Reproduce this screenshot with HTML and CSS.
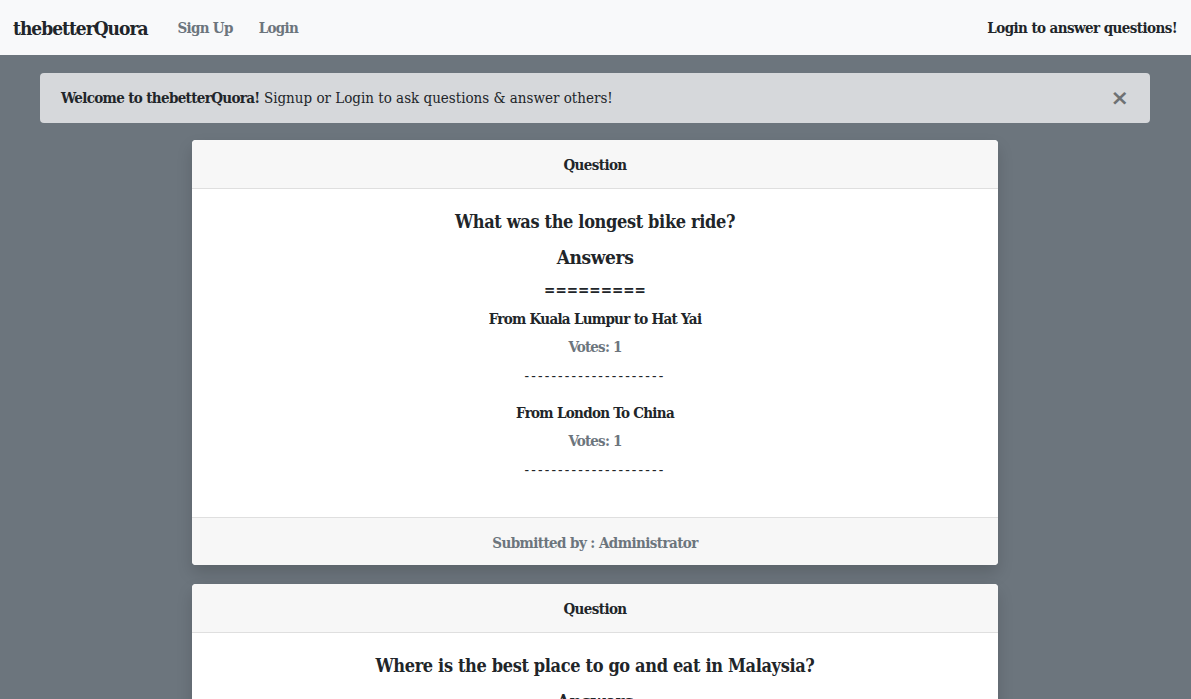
FILE: index.html
```html
<!DOCTYPE html>
<html lang="en">
<head>
    <meta charset="UTF-8">
    <meta name="viewport" content="width=device-width, initial-scale=1.0">
    <title>thebetterQuora</title>
    <link rel="stylesheet" href="styles.css">
</head>
<body>
    <nav class="navbar">
        <a class="brand" href="#">thebetterQuora</a>
        <ul class="nav-links">
            <li><a href="#signup">Sign Up</a></li>
            <li><a href="#login">Login</a></li>
        </ul>
        <span class="nav-text">Login to answer questions!</span>
    </nav>

    <main class="container">
        <div class="alert">
            <p><strong>Welcome to thebetterQuora!</strong> Signup or Login to ask questions &amp; answer others!</p>
            <button class="close" aria-label="Close">&times;</button>
        </div>

        <div class="card">
            <div class="card-header">Question</div>
            <div class="card-body">
                <h2 class="question">What was the longest bike ride?</h2>
                <h3 class="answers-title">Answers</h3>
                <div class="divider-eq">=========</div>
                <div class="answer">
                    <h4>From Kuala Lumpur to Hat Yai</h4>
                    <p class="votes">Votes: 1</p>
                    <p class="divider">---------------------</p>
                </div>
                <div class="answer">
                    <h4>From London To China</h4>
                    <p class="votes">Votes: 1</p>
                    <p class="divider">---------------------</p>
                </div>
            </div>
            <div class="card-footer">Submitted by : Administrator</div>
        </div>

        <div class="card">
            <div class="card-header">Question</div>
            <div class="card-body">
                <h2 class="question">Where is the best place to go and eat in Malaysia?</h2>
                <h3 class="answers-title">Answers</h3>
                <div class="divider-eq">=========</div>
            </div>
        </div>
    </main>
</body>
</html>
```

FILE: styles.css
```css
body {
    margin: 0;
    padding: 0;
    background-color: #6c757d;
    font-family: "DejaVu Serif Condensed", "DejaVu Serif", serif;
    font-size: 15px;
    color: #212529;
}

a {
    text-decoration: none;
}

.navbar {
    display: flex;
    align-items: center;
    height: 55px;
    padding: 0 14px 0 13px;
    background-color: #f8f9fa;
    box-sizing: border-box;
}

.brand {
    color: #212529;
    font-size: 19px;
    font-weight: bold;
    letter-spacing: -1px;
    margin-right: 17px;
}

.nav-links {
    list-style-type: none;
    margin: 0;
    padding: 0;
    display: flex;
    flex: 1;
}

.nav-links li {
    padding: 0 13px;
}

.nav-links a {
    color: #6c757d;
    font-weight: bold;
    font-size: 15px;
    letter-spacing: -0.7px;
}

.nav-text {
    font-weight: bold;
    font-size: 15px;
    letter-spacing: -0.58px;
}

.container {
    max-width: 1110px;
    margin: 0 auto;
    padding: 18px 41px 0 40px;
}

.alert {
    display: flex;
    align-items: center;
    justify-content: space-between;
    height: 50px;
    padding: 0 21px;
    box-sizing: border-box;
    background-color: #d6d8db;
    border-radius: 4px;
    margin-bottom: 17px;
}

.alert p {
    margin: 0;
    font-size: 15px;
}

.alert strong {
    font-weight: bold;
    letter-spacing: -0.65px;
}

.close {
    background: none;
    border: none;
    padding: 0;
    font-size: 22px;
    font-weight: bold;
    color: #6e7173;
    cursor: pointer;
    font-family: "DejaVu Sans", sans-serif;
    line-height: 1;
}

.card {
    width: 806px;
    margin: 0 auto 19px;
    background-color: #fff;
    border-radius: 4px;
    box-shadow: 0 8px 16px rgba(0, 0, 0, 0.15);
    text-align: center;
    overflow: hidden;
}

.card-header {
    height: 48px;
    line-height: 50px;
    background-color: #f7f7f7;
    border-bottom: 1px solid #dfdfdf;
    font-weight: bold;
    font-size: 15px;
    letter-spacing: -0.6px;
}

.card-body {
    padding: 21px 20px 20px;
}

.card-footer {
    height: 48px;
    line-height: 50px;
    box-sizing: border-box;
    background-color: #f7f7f7;
    border-top: 1px solid #dfdfdf;
    color: #6c757d;
    font-weight: bold;
    font-size: 15px;
    letter-spacing: -0.57px;
}

.question {
    margin: 0 0 11px;
    font-size: 18px;
    line-height: 24px;
    font-weight: bold;
    letter-spacing: -0.35px;
}

.answers-title {
    margin: 0 0 10px;
    font-size: 19px;
    line-height: 24px;
    font-weight: bold;
    letter-spacing: -0.4px;
}

.divider-eq {
    font-size: 15px;
    line-height: 22px;
    font-weight: bold;
    margin-bottom: 8px;
}

.answer h4 {
    margin: 0;
    font-size: 15px;
    line-height: 20px;
    font-weight: bold;
    letter-spacing: -0.7px;
}

.votes {
    margin: 8px 0 0;
    color: #6c757d;
    font-weight: bold;
    font-size: 15px;
    line-height: 20px;
    letter-spacing: -0.8px;
}

.divider {
    margin: 9px 0 17px;
    font-size: 15px;
    line-height: 20px;
    letter-spacing: 2.15px;
}
```
